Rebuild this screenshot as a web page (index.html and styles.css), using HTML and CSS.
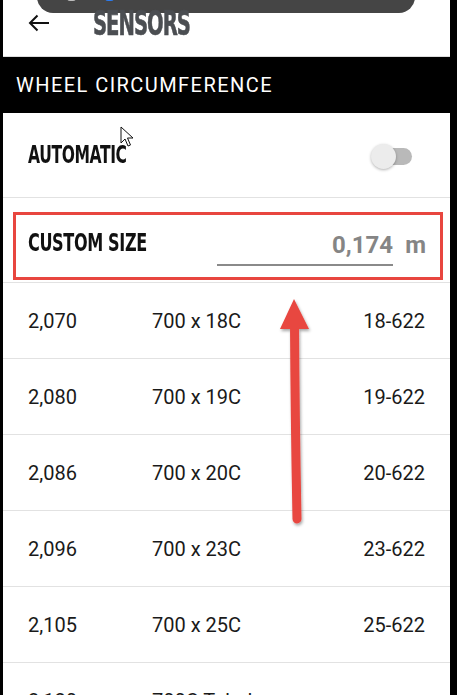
FILE: index.html
```html
<!DOCTYPE html>
<html lang="en">

<head>
    <meta charset="UTF-8">
    <meta name="viewport" content="width=device-width, initial-scale=1.0">
    <title>Sensors</title>
    <link rel="stylesheet" href="styles.css">
</head>

<body>
    <div class="screen">
        <div class="snackbar">
            <span class="snack-dot light"></span>
            <span class="snack-dot blue"></span>
        </div>

        <header class="topbar">
            <svg class="back" width="22" height="18" viewBox="0 0 22 18">
                <path d="M21 9H2M9.5 1.5L2 9l7.5 7.5" fill="none" stroke="#111" stroke-width="2"/>
            </svg>
            <h1>SENSORS</h1>
        </header>

        <div class="section-title">WHEEL CIRCUMFERENCE</div>

        <div class="row auto-row">
            <span class="label">AUTOMATIC</span>
            <span class="toggle"><span class="thumb"></span></span>
        </div>

        <div class="custom-wrap">
            <div class="custom-row">
                <span class="label">CUSTOM SIZE</span>
                <div class="size-field">
                    <span class="size-input">0,174</span>
                    <span class="unit">m</span>
                </div>
            </div>
        </div>

        <ul class="sizes">
            <li><span class="c1">2,070</span><span class="c2">700 x 18C</span><span class="c3">18-622</span></li>
            <li><span class="c1">2,080</span><span class="c2">700 x 19C</span><span class="c3">19-622</span></li>
            <li><span class="c1">2,086</span><span class="c2">700 x 20C</span><span class="c3">20-622</span></li>
            <li><span class="c1">2,096</span><span class="c2">700 x 23C</span><span class="c3">23-622</span></li>
            <li><span class="c1">2,105</span><span class="c2">700 x 25C</span><span class="c3">25-622</span></li>
            <li class="last"><span class="c1">2,120</span><span class="c2">700C Tubular</span><span class="c3"></span></li>
        </ul>

        <!-- annotation arrow -->
        <svg class="arrow" width="40" height="240" viewBox="0 0 40 240">
            <defs>
                <filter id="sh" x="-50%" y="-10%" width="200%" height="120%">
                    <feDropShadow dx="1" dy="2" stdDeviation="1.5" flood-color="#000" flood-opacity="0.35"/>
                </filter>
            </defs>
            <g filter="url(#sh)" fill="#e8463f">
                <path d="M18.5 26 Q19 120 21 222" stroke="#e8463f" stroke-width="9" stroke-linecap="round" fill="none"/>
                <polygon points="18,2 4,32 33,32"/>
            </g>
        </svg>

        <svg class="cursor" width="14" height="22" viewBox="0 0 14 22">
            <path d="M1 1v16l4-4 3 7 2.5-1-3-7h5.5z" fill="#fff" stroke="#111" stroke-width="1"/>
        </svg>
    </div>
</body>

</html>
```

FILE: styles.css
```css
html, body {
    margin: 0;
    background: #000;
    overflow: hidden;
}

body {
    font-family: Roboto, "Noto Sans", sans-serif;
    color: #1a1a1a;
}

.screen {
    position: relative;
    margin: 0 7px 0 3px;
    height: 695px;
    background: #fff;
    overflow: hidden;
}

.snackbar {
    position: absolute;
    top: -20px;
    left: 34px;
    width: 378px;
    height: 33px;
    background: #454545;
    border-radius: 16px;
}

.snack-dot {
    position: absolute;
    bottom: 12px;
    width: 9px;
    height: 3px;
    border-radius: 0 0 4px 4px;
}

.snack-dot.light {
    left: 30px;
    background: #bdbdbd;
}

.snack-dot.blue {
    left: 68px;
    background: #2b7bf0;
}

.topbar {
    height: 56px;
    display: flex;
    align-items: center;
    border-bottom: 1px solid #ddd;
}

.back {
    margin-left: 25px;
    margin-top: -10px;
}

.topbar h1 {
    margin: -10px 0 0 43px;
    font-family: "DejaVu Sans Condensed", "DejaVu Sans", sans-serif;
    font-stretch: condensed;
    font-weight: 900;
    font-size: 33px;
    color: #4b4e52;
    letter-spacing: -1.5px;
    transform: scaleX(0.66);
    transform-origin: left center;
    -webkit-text-stroke: 0.6px #4b4e52;
}

.section-title {
    height: 56px;
    background: #000;
    color: #fff;
    font-size: 20px;
    letter-spacing: 1.45px;
    display: flex;
    align-items: center;
    padding-left: 13px;
}

.label {
    font-family: "DejaVu Sans Condensed", "DejaVu Sans", sans-serif;
    font-stretch: condensed;
    font-weight: bold;
    font-size: 24px;
    color: #111;
    letter-spacing: -0.5px;
    transform: scaleX(0.72);
    transform-origin: left center;
    white-space: nowrap;
}

.auto-row {
    height: 84px;
    display: flex;
    align-items: center;
    justify-content: space-between;
    padding: 0 38px 0 25px;
    border-bottom: 1px solid #e2e2e2;
}

.toggle {
    position: relative;
    width: 36px;
    height: 17px;
    border-radius: 9px;
    background: #b9b9b9;
    margin-top: 2px;
}

.thumb {
    position: absolute;
    left: -5px;
    top: -4px;
    width: 25px;
    height: 25px;
    border-radius: 50%;
    background: #ececec;
    box-shadow: 0 1px 3px rgba(0, 0, 0, 0.3);
}

.custom-wrap {
    padding: 14px 7px 2px 10px;
    border-bottom: 1px solid #e2e2e2;
}

.custom-row {
    height: 62px;
    border: 3px solid #e8463f;
    display: flex;
    align-items: center;
    padding: 0 14px 0 12px;
}

.custom-row .label {
    flex: 1;
    margin-top: -7px;
    transform: scaleX(0.745);
}

.size-field {
    display: flex;
    align-items: flex-end;
    margin-top: 4px;
}

.size-input {
    width: 176px;
    text-align: right;
    font-size: 24px;
    font-weight: bold;
    line-height: 28px;
    color: #858585;
    padding-bottom: 5px;
    border-bottom: 2px solid #8a8a8a;
}

.unit {
    width: 33px;
    text-align: right;
    font-size: 24px;
    font-weight: bold;
    line-height: 28px;
    color: #858585;
    padding-bottom: 7px;
}

.sizes {
    list-style: none;
    margin: 0;
    padding: 0;
}

.sizes li {
    height: 75px;
    display: flex;
    align-items: center;
    padding: 0 25px;
    border-bottom: 1px solid #e2e2e2;
    font-size: 20px;
}

.c1 {
    width: 124px;
}

.c2 {
    flex: 1;
}

.arrow {
    position: absolute;
    left: 273px;
    top: 297px;
}

.cursor {
    position: absolute;
    left: 117px;
    top: 126px;
}
```
